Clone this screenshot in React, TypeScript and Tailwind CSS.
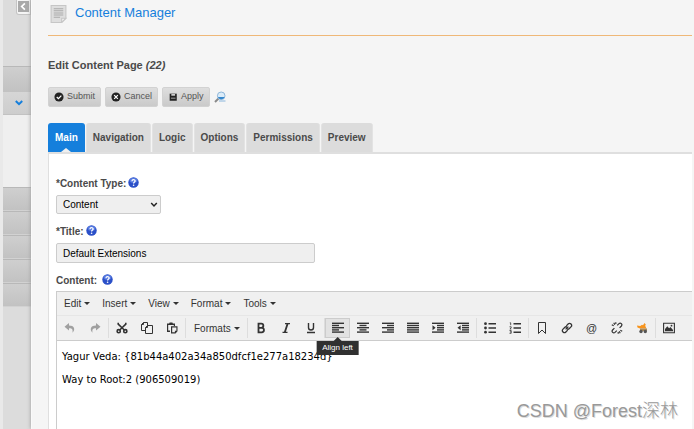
import type { ReactNode } from 'react';
import { clsx } from 'clsx';

const tabs = ['Main', 'Navigation', 'Logic', 'Options', 'Permissions', 'Preview'];
const menus = ['Edit', 'Insert', 'View', 'Format', 'Tools'];

function Icon({ children, className }: { children: ReactNode; className?: string }) {
  return (
    <svg viewBox="0 0 12 12" className={clsx('size-3 shrink-0', className)} fill="currentColor" aria-hidden="true">
      {children}
    </svg>
  );
}

// Five stacked text lines, each given as [x, width]
function Lines({ rows, children }: { rows: number[][]; children?: ReactNode }) {
  return (
    <Icon>
      {rows.map(([x, width], i) => (
        <rect key={i} x={x} y={0.6 + i * 2.2} width={width} height="1.4" />
      ))}
      {children}
    </Icon>
  );
}

const undoPath = 'M5 1 .5 4.800 5 8.600V6.200c2.800-.1 4.200.9 3.400 4.600C12 7 10 3.400 5 3.400z';
const linkPath = 'M4.600 7.400 7.400 4.600M5.300 3.900 7.400 1.800a1.600 1.600 0 0 1 2.300 0l.5.5a1.600 1.600 0 0 1 0 2.300L8.100 6.700a1.600 1.600 0 0 1-2 .2M6.700 8.100 4.600 10.200a1.600 1.600 0 0 1-2.300 0l-.5-.5a1.600 1.600 0 0 1 0-2.300l2.100-2.100a1.600 1.600 0 0 1 2-.2';

const toolGroups = [
  [
    { name: 'Undo', icon: <Icon className="text-[#a0a0a0]"><path d={undoPath} /></Icon> },
    { name: 'Redo', icon: <Icon className="-scale-x-100 text-[#a0a0a0]"><path d={undoPath} /></Icon> },
  ],
  [
    {
      name: 'Cut',
      icon: (
        <Icon>
          <g fill="none" stroke="currentColor" strokeWidth="1.6">
            <path d="M2.200.800v1.400L8.300 8M9.800.800v1.400L3.700 8" />
            <circle cx="2.700" cy="9.200" r="1.600" />
            <circle cx="9.300" cy="9.200" r="1.600" />
          </g>
        </Icon>
      ),
    },
    {
      name: 'Copy',
      icon: (
        <Icon>
          <path d="M4.500 8.500h-4v-6l2-2h4v3M2.500.500v2h-2M4.500 5.500l2-2h5v8h-7zM6.500 3.500v2h-2" fill="none" stroke="currentColor" />
        </Icon>
      ),
    },
    {
      name: 'Paste',
      icon: (
        <Icon>
          <path d="M1 1.500h2.500V.500h3v1H9V4H7.800V3H2.200v5.500H4V10H1zM5 4.200h6.500v5L9.500 11.500H5zM6.200 5.400v4.900h2.700V8.700h1.500V5.400z" fillRule="evenodd" />
          <path d="M3 1.500h4V3H3z" />
        </Icon>
      ),
    },
  ],
  [],
  [
    {
      name: 'Bold',
      icon: (
        <Icon>
          <path d="M3.500 1.700h2.800a1.900 1.900 0 0 1 0 4.100H3.500zM3.500 5.800h3.200a2.200 2.200 0 0 1 0 4.500H3.500z" fill="none" stroke="currentColor" strokeWidth="1.800" />
        </Icon>
      ),
    },
    {
      name: 'Italic',
      icon: <Icon><path d="M5 1h5v1.200H8.400L5.900 9.800H7.500V11h-5V9.800h1.500L6.500 2.200H5z" /></Icon>,
    },
    {
      name: 'Underline',
      icon: (
        <Icon>
          <path d="M3.500 1v4.500a2.500 2.500 0 0 0 5 0V1M2 10.500h8" fill="none" stroke="currentColor" strokeWidth="1.400" />
        </Icon>
      ),
    },
  ],
  [
    { name: 'Align left', icon: <Lines rows={[[0, 12], [0, 7], [0, 12], [0, 7], [0, 12]]} /> },
    { name: 'Align center', icon: <Lines rows={[[0, 12], [2.5, 7], [0, 12], [2.5, 7], [0, 12]]} /> },
    { name: 'Align right', icon: <Lines rows={[[0, 12], [5, 7], [0, 12], [5, 7], [0, 12]]} /> },
    { name: 'Justify', icon: <Lines rows={[[0, 12], [0, 12], [0, 12], [0, 12], [0, 12]]} /> },
    {
      name: 'Increase indent',
      icon: <Lines rows={[[0, 12], [5, 7], [5, 7], [5, 7], [0, 12]]}><path d="M.500 3.200 3.600 5.800.500 8.300z" /></Lines>,
    },
    {
      name: 'Decrease indent',
      icon: <Lines rows={[[0, 12], [5, 7], [5, 7], [5, 7], [0, 12]]}><path d="M3.600 3.200.500 5.800l3.100 2.500z" /></Lines>,
    },
  ],
  [
    {
      name: 'Bullet list',
      icon: (
        <Icon>
          <path d="M4.500 1H12v1.500H4.500zM4.500 5.200H12v1.500H4.500zM4.500 9.500H12V11H4.500z" />
          <circle cx="1.500" cy="1.700" r="1.400" />
          <circle cx="1.500" cy="6" r="1.400" />
          <circle cx="1.500" cy="10.200" r="1.400" />
        </Icon>
      ),
    },
    {
      name: 'Numbered list',
      icon: (
        <Icon>
          <path d="M4.500 1H12v1.500H4.500zM4.500 5.200H12v1.500H4.500zM4.500 9.500H12V11H4.500z" />
          <path d="M.800.800h.900v2.400M.500 4.800h1.700v1L.900 7h1.500M.500 8.500h1.700v2.800H.500M.900 9.900h1.300" fill="none" stroke="currentColor" strokeWidth=".8" />
        </Icon>
      ),
    },
  ],
  [
    {
      name: 'Anchor',
      icon: <Icon><path d="M2.500.500h7v11L6 8l-3.500 3.500z" fill="none" stroke="currentColor" /></Icon>,
    },
    {
      name: 'Insert link',
      icon: <Icon><path d={linkPath} fill="none" stroke="currentColor" strokeWidth="1.300" /></Icon>,
    },
    { name: 'Insert email', icon: <span className="text-[11px] leading-3">@</span> },
    {
      name: 'Remove link',
      icon: (
        <Icon>
          <path
            d="M6.200 3.400 8 1.600a1.700 1.700 0 0 1 2.400 2.400L8.600 5.800M5.800 8.600 4 10.400A1.700 1.700 0 0 1 1.600 8l1.800-1.800M2.800.800l1 1.900M.800 2.800l1.900 1M9.200 11.200l-1-1.900M11.200 9.200l-1.900-1M4.800.300v1.800M7.200 11.700V9.900"
            fill="none"
            stroke="currentColor"
            strokeWidth="1.200"
          />
        </Icon>
      ),
    },
    {
      name: 'Insert extension',
      icon: (
        <Icon>
          <path d="m1 3.500 3.200.5L6 2.800l1 .4L8.500 1l1.300 1.500-.6 1.300 1.200 2.700H4L1.500 5.500z" fill="#f7941d" />
          <path d="M4 6.500h7L11 9H4z" fill="#a98a5c" />
          <circle cx="5" cy="9.500" r="1.700" fill="#555" />
          <circle cx="9.300" cy="9.500" r="1.700" fill="#555" />
        </Icon>
      ),
    },
  ],
  [
    {
      name: 'Insert image',
      icon: (
        <Icon>
          <path d="M.600 1.300h10.800v9.400H.600z" fill="none" stroke="currentColor" strokeWidth="1.100" />
          <path d="M2 9.300V7l2.300-2.800 1.800 2L7.500 5 10 8v1.300z" />
          <circle cx="8.500" cy="3.700" r=".9" />
        </Icon>
      ),
    },
  ],
];

function Caret() {
  return <span className="border-x-[3px] border-t-[3px] border-x-transparent border-t-[#333]" />;
}

function HelpIcon() {
  return (
    <button type="button" aria-label="Help" className="size-[11px]">
      <svg viewBox="0 0 12 12" aria-hidden="true">
        <circle cx="6" cy="6" r="5.700" fill="#2b50c8" />
        <ellipse cx="6" cy="3.600" rx="4.300" ry="2.900" fill="#6f93ef" opacity=".6" />
        <path d="M4.300 4.500c0-2.200 3.500-2.100 3.500-.2C7.800 5.600 6.100 5.500 6.100 7.200" fill="none" stroke="#fff" strokeWidth="1.400" />
        <circle cx="6.100" cy="9" r=".9" fill="#fff" />
      </svg>
    </button>
  );
}

function ActionButton({ label, children }: { label: string; children: ReactNode }) {
  return (
    <button
      type="button"
      className="flex h-5 items-center gap-[3px] rounded-[2px] border border-[#d2d2d2] bg-linear-to-b from-[#dedede] to-[#cacaca] px-[5px] text-[9px] text-[#555]"
    >
      <Icon className="size-[10px] text-[#222]">{children}</Icon>
      {label}
    </button>
  );
}

function Sidebar() {
  const row = 'border-t border-[#b8b8b8] bg-linear-to-b from-[#cfcfcf] to-[#c2c2c2]';
  return (
    <aside className="flex w-[31px] shrink-0 flex-col border-l-[3px] border-[#e9e9e9] bg-[#dcdcdc]">
      <div className="flex h-[66px] items-start justify-end">
        <button type="button" aria-label="Collapse menu" className="flex h-[15px] w-[15px] items-center justify-center rounded-bl-[3px] border border-t-0 border-[#c4c4c4] bg-[#f5f5f5] pb-px">
          <svg viewBox="0 0 12 12" className="size-[11px]" aria-hidden="true">
            <path d="M0 0h12v12H0z" fill="#a9a9a9" />
            <path d="M7.500 2.500 4 6l3.500 3.500" fill="none" stroke="#fff" strokeWidth="1.800" />
          </svg>
        </button>
      </div>
      <div className={clsx(row, 'h-[25px]')} />
      <button type="button" aria-label="Expand section" className="flex h-6 items-center justify-center border-y border-[#c2c2c2] bg-linear-to-b from-[#d6d6d6] to-[#cdcdcd] pl-1">
        <svg viewBox="0 0 8 6" className="h-[6px] w-2" aria-hidden="true">
          <path d="M.800 1 4 4.200 7.200 1" fill="none" stroke="#157fdc" strokeWidth="2" />
        </svg>
      </button>
      <div className="h-[72px] bg-[#efefef]" />
      {[0, 1, 2, 3, 4].map((i) => (
        <div key={i} className={clsx(row, 'h-6 border-b border-b-[#d2d2d2]')} />
      ))}
    </aside>
  );
}

function Editor() {
  return (
    <div className="flex grow flex-col border-t border-l border-[#ccc] text-[10px] text-[#333]">
      <div className="flex h-6 items-center gap-3 border-b border-[#e6e6e6] bg-[#f0f0f0] pl-[7px]">
        {menus.map((menu) => (
          <button key={menu} type="button" className="flex items-center gap-[3px]">
            {menu}
            <Caret />
          </button>
        ))}
      </div>
      <div className="flex h-[25px] items-center border-b border-[#ccc] bg-[#f0f0f0]">
        {toolGroups.map((group, i) => (
          <div key={i} className={clsx('flex h-5 items-center', i > 0 && 'ml-px border-l border-[#ddd]')}>
            {group.length === 0 && (
              <button type="button" className="flex w-[60px] items-center gap-[3px] pl-2">
                Formats
                <Caret />
              </button>
            )}
            {group.map((tool) => (
              <button
                key={tool.name}
                type="button"
                aria-label={tool.name}
                className={clsx(
                  'relative flex h-5 w-[25px] items-center justify-center',
                  tool.name === 'Align left' && 'border border-[#ccc] bg-[#e2e2e2]',
                )}
              >
                {tool.icon}
                {tool.name === 'Align left' && (
                  <span role="tooltip" className="absolute top-full left-1/2 z-10 mt-1 -translate-x-1/2 bg-[#303030] px-[6px] text-[8px] leading-[14px] whitespace-nowrap text-white">
                    <span className="absolute bottom-full left-1/2 -translate-x-1/2 border-x-4 border-b-4 border-x-transparent border-b-[#303030]" />
                    {tool.name}
                  </span>
                )}
              </button>
            ))}
          </div>
        ))}
      </div>
      <div className="flex grow flex-col gap-2 bg-white py-2 pl-[5px] font-['DejaVu_Sans',Verdana,sans-serif] text-[10px] leading-[15px] text-black">
        <p>Yagur Veda: {'{81b44a402a34a850dfcf1e277a18234d}'}</p>
        <p>Way to Root:2 (906509019)</p>
      </div>
    </div>
  );
}

export default function App() {
  return (
    <div className="relative flex min-h-screen bg-[#f5f5f5] font-['Liberation_Sans',Arial,sans-serif] text-[#4a4a4a]">
      <Sidebar />
      <main className="flex min-w-0 grow flex-col border-l border-[#fafafa] bg-[#f5f5f5] pr-[2px] pl-4 shadow-[0_0_4px_#999]">
        <header className="flex h-9 items-start gap-2 border-b border-b-[#efb878] pt-[5px] pl-[2px]">
          <svg viewBox="0 0 15 17" className="h-[18px] w-[17px]" aria-hidden="true">
            <path d="M.500.500h14v12l-4 4H.500z" fill="#dedede" stroke="#c6c6c6" />
            <path d="M3 3.500h9M3 5.500h9M3 7.500h9M3 9.500h9M3 11.500h6" stroke="#aaa" />
            <path d="M10.500 16.500v-4h4z" fill="#f2f2f2" stroke="#c6c6c6" />
          </svg>
          <a href="#content" className="text-[13px] leading-4 text-[#157fdc]">Content Manager</a>
        </header>

        <h1 className="mt-[21px] text-[11px] leading-4 font-bold">
          Edit Content Page <em>(22)</em>
        </h1>

        <div className="mt-[14px] flex items-center gap-1">
          <ActionButton label="Submit">
            <circle cx="6" cy="6" r="5.500" />
            <path d="m3.300 6 2 2 3.500-3.700" fill="none" stroke="#fff" strokeWidth="1.500" />
          </ActionButton>
          <ActionButton label="Cancel">
            <circle cx="6" cy="6" r="5.500" />
            <path d="m3.800 3.800 4.400 4.400M8.200 3.800 3.800 8.200" stroke="#fff" strokeWidth="1.500" />
          </ActionButton>
          <ActionButton label="Apply">
            <path d="M2 2h8.500v8.500H2z" />
            <path d="M4 2.500h4.500v2H4zM3.500 7H9v.8H3.500z" fill="#ccc" />
          </ActionButton>
          <button type="button" aria-label="Preview page">
            <svg viewBox="0 0 12 12" className="size-3" aria-hidden="true">
              <path d="M1 11 4.500 7.500" stroke="#8a8a8a" strokeWidth="2" />
              <circle cx="7.200" cy="4.800" r="3.800" fill="#dcecf8" stroke="#8fb7da" />
              <path d="M3.800 6h6.900a3.800 3.800 0 0 1-6.900 0z" fill="#3687cc" />
              <path d="M5 10h6.500" stroke="#8ab6dc" />
            </svg>
          </button>
        </div>

        <nav className="mt-4 flex gap-px text-[10px] font-bold">
          {tabs.map((tab, i) => (
            <button
              key={tab}
              type="button"
              className={clsx(
                'relative h-[29px] rounded-t-[3px]',
                i === 0 ? 'bg-[#157fdc] px-[7px] text-white' : 'border-x border-[#e3e3e3] bg-[#dcdcdc] px-[6px]',
              )}
            >
              {tab}
              {i === 0 && (
                <span className="absolute bottom-0 left-1/2 -translate-x-1/2 border-x-[5px] border-b-4 border-x-transparent border-b-[#f0f0f0]" />
              )}
            </button>
          ))}
        </nav>

        <form className="flex grow flex-col border-t-2 border-l border-[#dfdfdf] bg-white pt-5 pl-[7px] text-[10px]">
          <div className="flex h-4 items-center gap-[2px] font-bold">
            <label htmlFor="content-type" className="pt-[2px]">*Content Type:</label>
            <HelpIcon />
          </div>
          <div className="relative mt-[5px] h-[19px] w-[105px]">
            <select id="content-type" className="size-full appearance-none rounded-[2px] border border-[#ccc] bg-[#efefef] pl-[6px] text-black">
              <option>Content</option>
            </select>
            <svg viewBox="0 0 8 6" className="pointer-events-none absolute top-[7px] right-[3px] h-[6px] w-2" aria-hidden="true">
              <path d="M1.200 1 4 3.900 6.800 1" fill="none" stroke="#222" strokeWidth="1.500" />
            </svg>
          </div>

          <div className="mt-2 flex h-4 items-center gap-[2px] font-bold">
            <label htmlFor="title" className="pt-[2px]">*Title:</label>
            <HelpIcon />
          </div>
          <input
            id="title"
            type="text"
            defaultValue="Default Extensions"
            className="mt-[5px] h-5 w-[259px] rounded-[2px] border border-[#ccc] bg-[#efefef] pl-[6px] text-black"
          />

          <div className="mt-2 mb-1 flex h-4 items-center gap-[5px] font-bold">
            <span className="pt-[2px]">Content:</span>
            <HelpIcon />
          </div>
          <Editor />
        </form>
      </main>

      <p className="pointer-events-none absolute right-4 bottom-[6px] font-['Liberation_Sans','Noto_Sans_CJK_SC',sans-serif] text-[18px] leading-6 font-light text-[#999] text-shadow-[1px_1px_0_#ddd]">
        CSDN @Forest深林
      </p>
    </div>
  );
}
